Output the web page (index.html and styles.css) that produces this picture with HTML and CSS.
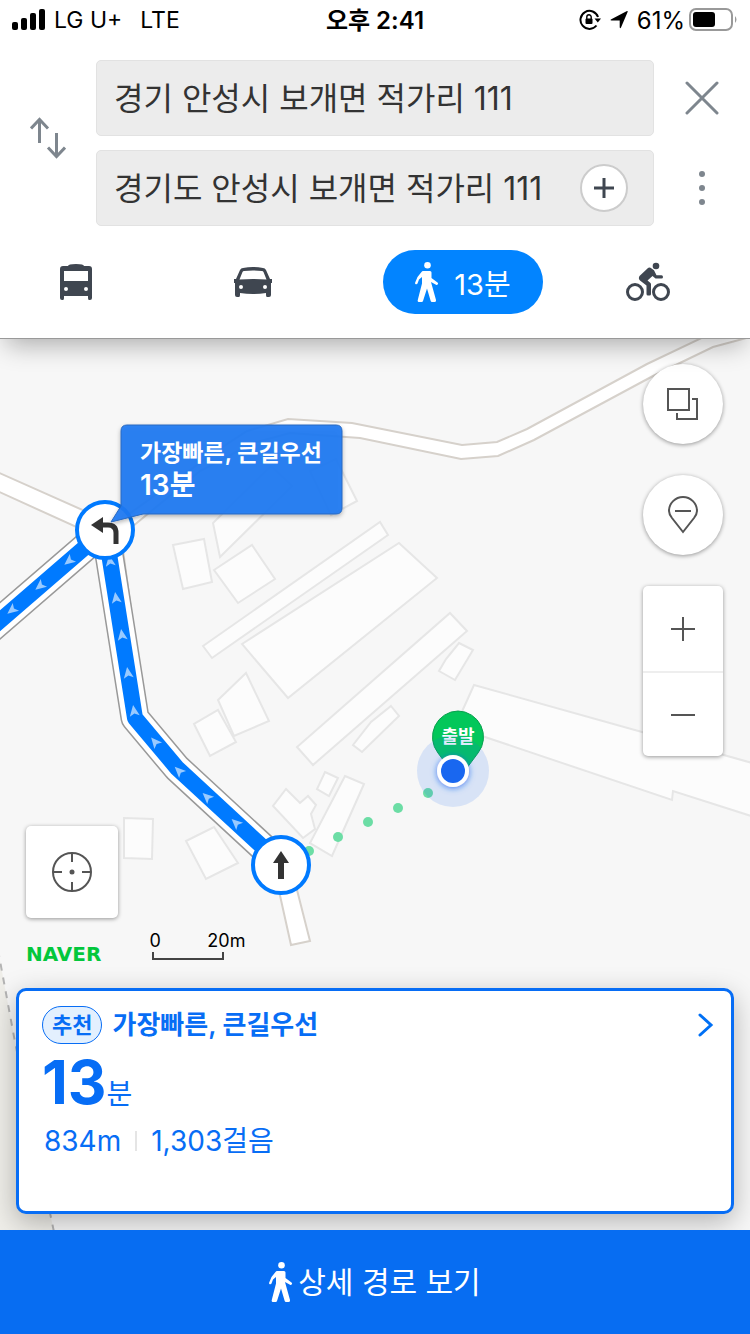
FILE: index.html
```html
<!DOCTYPE html>
<html lang="ko">
<head>
    <meta charset="UTF-8">
    <meta name="viewport" content="width=device-width, initial-scale=1.0">
    <title>도보 길찾기</title>
    <link rel="stylesheet" href="styles.css">
</head>
<body>
    <header class="header">
        <div class="status">
            <div class="status-left">
                <svg width="34" height="22" viewBox="0 0 34 22">
                    <rect x="0" y="13" width="6" height="8" rx="2"/>
                    <rect x="9" y="9" width="6" height="12" rx="2"/>
                    <rect x="18" y="4" width="6" height="17" rx="2"/>
                    <rect x="27" y="0" width="6" height="21" rx="2"/>
                </svg>
                <span>LG U+</span>
                <span class="network">LTE</span>
            </div>
            <div class="status-time">오후 2:41</div>
            <div class="status-right">
                <svg width="22" height="22" viewBox="0 0 22 22">
                    <path d="M17.5 16.5A9 9 0 1 1 19 8" fill="none" stroke="#000" stroke-width="2"/>
                    <path d="M15.5 9.5h6.5l-3.2 4z"/>
                    <rect x="6.5" y="9.5" width="7" height="5.5" rx="1"/>
                    <path d="M7.800 10V8a2.200 2.200 0 0 1 4.400 0v2" fill="none" stroke="#000" stroke-width="1.4"/>
                </svg>
                <svg width="20" height="20" viewBox="0 0 20 20">
                    <path d="M17.5 1.200q1.800-.8 1 1L12 17.500q-.9 1.500-1.300-.2V10.500H2.500q-2-.3-.2-1.300z"/>
                </svg>
                <span>61%</span>
                <svg width="49" height="24" viewBox="0 0 49 24">
                    <rect x="1" y="1" width="42" height="21" rx="6" fill="#fff" stroke="#999" stroke-width="2"/>
                    <rect x="4" y="4" width="22" height="15" rx="3"/>
                    <path d="M46 8q3 3.500 0 7z" fill="#999"/>
                </svg>
            </div>
        </div>

        <div class="search">
            <button class="icon-button swap" aria-label="출발지와 도착지 바꾸기">
                <svg width="36" height="42" viewBox="0 0 36 42" fill="none" stroke="#7e868e" stroke-width="3">
                    <path d="M9.500 26V2M1 11.500l8.500-9 8.500 9"/>
                    <path d="M26.500 16v24M18 30.500l8.500 9 8.500-9"/>
                </svg>
            </button>
            <div class="fields">
                <div class="field">
                    <input type="text" aria-label="출발지" value="경기 안성시 보개면 적가리 111">
                </div>
                <div class="field">
                    <input type="text" aria-label="도착지" value="경기도 안성시 보개면 적가리 111">
                    <button class="add" aria-label="경유지 추가">
                        <svg width="20" height="20" viewBox="0 0 20 20" stroke="#3f4650" stroke-width="3">
                            <path d="M10 0v20M0 10h20"/>
                        </svg>
                    </button>
                </div>
            </div>
            <div class="actions">
                <button class="icon-button" aria-label="닫기">
                    <svg width="34" height="34" viewBox="0 0 34 34" stroke="#7e868e" stroke-width="3" stroke-linecap="round">
                        <path d="M2 2l30 30M32 2L2 32"/>
                    </svg>
                </button>
                <button class="icon-button" aria-label="더보기">
                    <svg width="34" height="36" viewBox="0 0 34 36" fill="#7e868e">
                        <circle cx="17" cy="4" r="3"/>
                        <circle cx="17" cy="18" r="3"/>
                        <circle cx="17" cy="32" r="3"/>
                    </svg>
                </button>
            </div>
        </div>

        <nav class="modes">
            <button class="mode" aria-label="대중교통">
                <svg width="32" height="36" viewBox="0 0 32 36" fill="#3f4650">
                    <path fill-rule="evenodd" d="M8 2q0-2 8-2t8 2h5q3 0 3 3v29q0 2-2 2h-1q-1 0-1-2v-2H4v2q0 2-1 2H2q-2 0-2-2V5q0-3 3-3zM4 7v10h24V7zM6 23a2 2 0 1 0 0 4 2 2 0 0 0 0-4zM26 23a2 2 0 1 0 0 4 2 2 0 0 0 0-4z"/>
                </svg>
            </button>
            <button class="mode" aria-label="자동차">
                <svg width="38" height="30" viewBox="0 0 38 30" fill="#3f4650">
                    <path fill-rule="evenodd" d="M9 1q10-2 20 0 2 0 3 2l4 9h2v4h-1v12q0 2-2 2h-2q-1 0-1-2v-2q-13 2-26 0v2q0 2-1 2H3q-2 0-2-2V16H0v-4h2l4-9q1-2 3-2zM10 4q-1 0-1.500 1L5.500 12.500q13.500-1 27 0L29.500 5q-.5-1-1.500-1-9-1-18 0zM7 18a2 2 0 1 0 0 4 2 2 0 0 0 0-4zM31 18a2 2 0 1 0 0 4 2 2 0 0 0 0-4z"/>
                </svg>
            </button>
            <button class="mode active">
                <svg width="24" height="40" viewBox="0 0 24 40" fill="#fff">
                    <circle cx="12.5" cy="3.300" r="3.300"/>
                    <path d="M8 9h7q1.500 0 1.500 1.500V16l6 4.500q1 .8.300 1.800t-1.800.400L16 20 21 38q.2 2-1.500 2H17q-1 0-1.300-1L12 26.500 8 39q-.3 1-1.300 1H4q-1.600 0-1.300-1.700L7 21.500V15l-3 2.500-1.500 4q-.5 1-1.600.7T.200 20.500L2.500 15 6.500 10q.7-1 1.500-1z"/>
                </svg>
                13분
            </button>
            <button class="mode" aria-label="자전거">
                <svg width="44" height="40" viewBox="0 0 44 40" fill="#3f4650">
                    <circle cx="9" cy="30" r="7.500" fill="none" stroke="#3f4650" stroke-width="3"/>
                    <circle cx="35" cy="30" r="7.500" fill="none" stroke="#3f4650" stroke-width="3"/>
                    <circle cx="30" cy="4" r="3.300"/>
                    <path d="M13.500 14L22 6q1-1 2.500-.2l3.500 2.500 2.500 5 5 0q1.500.2 1.500 1.700T35.500 16.500h-6L26.500 14l-5 4.500 3 2.500q.5.500.5 1.500V32q0 1.500-1.500 1.500H22q-1.500 0-1.500-1.500v-8.500L14 18.500q-2-2-.5-4.500z"/>
                </svg>
            </button>
        </nav>
    </header>

    <main class="map">
        <svg class="map-canvas" viewBox="0 339 750 891" preserveAspectRatio="xMidYMid slice">
            <defs>
                <path id="arrow" d="M0-6L5 5 0 2.500-5 5z"/>
                <filter id="shadow" x="-20%" y="-20%" width="140%" height="150%">
                    <feDropShadow dx="0" dy="2" stdDeviation="2" flood-opacity=".3"/>
                </filter>
                <filter id="glow" x="-50%" y="-50%" width="200%" height="200%">
                    <feDropShadow dx="0" dy="1" stdDeviation="3" flood-color="#1967f0" flood-opacity=".8"/>
                </filter>
            </defs>

            <!-- area at the lower left -->
            <path class="ground" d="M-2 950L15 1042 50 1213 54 1232H-2z"/>
            <path class="boundary" d="M-2 950L15 1042 50 1213 54 1232"/>

            <!-- roads -->
            <path class="road" d="M-5 471L105 520V540L-5 490z"/>
            <path class="road" d="M100 535L215 452 247 431 288 419 352 423 462 445 497 442 527 429 647 364 712 333H765L713 347 653 376 534 440 498 456 461 459 360 438 290 433 253 443 200 471 110 545z"/>
            <path class="road" d="M277 882L291 945 310 941 295 882z"/>
            <path class="road" d="M123 550L131 610"/>

            <!-- buildings -->
            <g class="building">
                <path d="M271 466L292 486 220 557 213 523z"/>
                <path d="M310 471L336 459 357 501 331 515z"/>
                <path d="M173 545L204 539 212 582 183 589z"/>
                <path d="M214 570L252 545 275 579 238 603z"/>
                <path d="M203 646L380 522 388 535 212 658z"/>
                <path d="M242 644L399 543 437 578 288 698z"/>
                <path d="M450 613L467 631 313 765 297 747z"/>
                <path d="M459 643L473 650 455 680 439 671 446 659z"/>
                <path d="M246 673L269 721 234 736 218 700z"/>
                <path d="M218 710L236 742 210 756 194 724z"/>
                <path d="M391 706L399 716 362 752 353 745 371 722z"/>
                <path d="M325 772L338 778 329 796 317 789z"/>
                <path d="M286 789L300 803 308 796 316 805 311 814 315 829 303 838 273 806z"/>
                <path d="M345 776L364 784 332 856 310 843z"/>
                <path d="M124 818L153 819 152 859 124 858z"/>
                <path d="M186 841L214 827 238 863 206 879z"/>
                <path d="M474 685L642 732 770 768V822L673 791 672 800 485 737 455 727z"/>
            </g>

            <!-- route -->
            <g class="route">
                <path class="route-edge" d="M-20 638L105 530 110 560 135 718 177 768 281 864"/>
                <path class="route-side" d="M-20 638L105 530 110 560 135 718 177 768 281 864"/>
                <path class="route-line" d="M-20 638L105 530 110 560 135 718 177 768 281 864"/>
            </g>
            <g class="route-arrows">
                <use href="#arrow" transform="translate(69 561) rotate(231)"/>
                <use href="#arrow" transform="translate(40 586) rotate(231)"/>
                <use href="#arrow" transform="translate(12 610) rotate(231)"/>
                <use href="#arrow" transform="translate(110 561) rotate(-9)"/>
                <use href="#arrow" transform="translate(116 598) rotate(-9)"/>
                <use href="#arrow" transform="translate(122 635) rotate(-9)"/>
                <use href="#arrow" transform="translate(128 673) rotate(-9)"/>
                <use href="#arrow" transform="translate(134 711) rotate(-9)"/>
                <use href="#arrow" transform="translate(155 742) rotate(-40)"/>
                <use href="#arrow" transform="translate(179 771) rotate(-46)"/>
                <use href="#arrow" transform="translate(207 797) rotate(-47)"/>
                <use href="#arrow" transform="translate(236 823) rotate(-47)"/>
            </g>
            <g class="walk-dots">
                <circle cx="309" cy="851" r="5"/>
                <circle cx="338" cy="837" r="5"/>
                <circle cx="368" cy="822" r="5"/>
                <circle cx="398" cy="808" r="5"/>
                <circle cx="428" cy="793" r="5"/>
            </g>

            <!-- turn points -->
            <circle class="turn" cx="105" cy="530" r="28"/>
            <path d="M91 525L103 517V533z" fill="#333"/>
            <path d="M101 525H108Q116 525 116 533V544" fill="none" stroke="#333" stroke-width="5"/>
            <circle class="turn" cx="281" cy="865" r="28"/>
            <path d="M281 851L289 863H284V879H278V863H273z" fill="#333"/>

            <!-- route label -->
            <path class="callout" filter="url(#shadow)" d="M127 425H336Q342 425 342 431V508Q342 514 336 514H143L111 522 121 506V431Q121 425 127 425z"/>
            <text class="callout-title" x="140" y="461">가장빠른, 큰길우선</text>
            <text class="callout-time" x="140" y="495">13분</text>

            <!-- start pin and current position -->
            <path class="pin" d="M458 711A26 26 0 0 0 438 753L458 780 478 753A26 26 0 0 0 458 711z"/>
            <text class="pin-text" x="458" y="743">출발</text>
            <circle class="halo" cx="453" cy="771" r="36"/>
            <circle cx="453" cy="771" r="16" fill="#fff" filter="url(#glow)"/>
            <circle cx="453" cy="771" r="12" fill="#1967f0"/>
        </svg>

        <div class="tools">
            <button class="round" aria-label="지도 종류">
                <svg width="32" height="32" viewBox="0 0 32 32" fill="none" stroke="#555" stroke-width="2">
                    <path d="M1 1h21v21H1zM25 11h5v20H10v-6"/>
                </svg>
            </button>
            <button class="round" aria-label="장소 숨기기">
                <svg width="32" height="38" viewBox="0 0 32 38" fill="none" stroke="#555" stroke-width="2">
                    <path d="M16 36L5 22Q2 18 2 15A14 14 0 0 1 30 15Q30 18 27 22zM8 15h16"/>
                </svg>
            </button>
            <div class="zoom">
                <button aria-label="확대">
                    <svg width="24" height="24" viewBox="0 0 24 24" stroke="#555" stroke-width="2">
                        <path d="M12 0v24M0 12h24"/>
                    </svg>
                </button>
                <button aria-label="축소">
                    <svg width="24" height="24" viewBox="0 0 24 24" stroke="#555" stroke-width="2">
                        <path d="M0 12h24"/>
                    </svg>
                </button>
            </div>
        </div>

        <button class="locate" aria-label="현재 위치">
            <svg width="42" height="42" viewBox="0 0 42 42" fill="none" stroke="#555" stroke-width="2">
                <circle cx="21" cy="21" r="19"/>
                <path d="M21 2v9M21 31v9M2 21h9M31 21h9"/>
                <circle cx="21" cy="21" r="2.500" fill="#555" stroke="none"/>
            </svg>
        </button>

        <div class="legend">
            <span class="logo">NAVER</span>
            <div class="scale">
                <div class="scale-text"><span>0</span><span>20m</span></div>
                <div class="scale-bar"></div>
            </div>
        </div>

        <section class="card">
            <div class="card-head">
                <span class="badge">추천</span>
                <h2>가장빠른, 큰길우선</h2>
                <button class="icon-button" aria-label="경로 보기">
                    <svg width="16" height="26" viewBox="0 0 16 26" fill="none" stroke="#0070f5" stroke-width="3" stroke-linecap="round">
                        <path d="M2 3l11 10L2 23"/>
                    </svg>
                </button>
            </div>
            <p class="duration"><strong>13</strong>분</p>
            <p class="detail"><span>834m</span><span>1,303걸음</span></p>
        </section>
    </main>

    <button class="start">
        <svg width="24" height="40" viewBox="0 0 24 40" fill="#fff">
            <circle cx="12.5" cy="3.300" r="3.300"/>
            <path d="M8 9h7q1.500 0 1.500 1.500V16l6 4.500q1 .8.300 1.800t-1.800.400L16 20 21 38q.2 2-1.500 2H17q-1 0-1.300-1L12 26.500 8 39q-.3 1-1.300 1H4q-1.600 0-1.300-1.700L7 21.500V15l-3 2.500-1.500 4q-.5 1-1.600.7T.200 20.500L2.500 15 6.500 10q.7-1 1.500-1z"/>
        </svg>
        <span>상세 경로 보기</span>
    </button>
</body>
</html>
```

FILE: styles.css
```css
* {
    box-sizing: border-box;
}

body {
    display: flex;
    flex-direction: column;
    min-height: 100vh;
    margin: 0;
    background-color: #fff;
    font-family: Inter, "Noto Sans CJK KR", sans-serif;
}

button,
input {
    font-family: inherit;
    border: none;
    padding: 0;
    background: none;
}

button {
    cursor: pointer;
}

svg {
    display: block;
    flex-shrink: 0;
}

.header {
    position: relative;
    z-index: 1;
    background-color: #fff;
    border-bottom: 1px solid #999;
    box-shadow: 0 12px 24px -6px rgba(0, 0, 0, 0.3);
}

/* status bar */
.status {
    display: grid;
    grid-template-columns: 1fr auto 1fr;
    align-items: center;
    height: 40px;
    padding: 0 12px;
    font-size: 24px;
}

.status-left,
.status-right {
    display: flex;
    align-items: center;
}

.status-left {
    gap: 8px;
    font-size: 23px;
}

.network {
    margin-left: 10px;
}

.status-time {
    padding-bottom: 3px;
    font-weight: 600;
}

.status-right {
    justify-content: flex-end;
    gap: 8px;
}

.status-right span {
    margin-right: -4px;
}

/* search */
.search {
    display: grid;
    grid-template-columns: 96px 1fr 96px;
    padding-top: 20px;
}

.icon-button {
    display: flex;
    align-items: center;
    justify-content: center;
}

.swap {
    padding-bottom: 10px;
}

.fields {
    display: flex;
    flex-direction: column;
    gap: 14px;
    min-width: 0;
}

.field {
    display: flex;
    align-items: center;
    height: 76px;
    padding: 0 25px 0 17px;
    background-color: #ececec;
    border: 1px solid #e2e2e2;
    border-radius: 5px;
}

.field input {
    flex: 1;
    min-width: 0;
    padding-bottom: 4px;
    font-size: 32px;
    color: #333;
}

.add {
    display: flex;
    align-items: center;
    justify-content: center;
    flex-shrink: 0;
    width: 48px;
    height: 48px;
    background-color: #fff;
    border: 2px solid #ccc;
    border-radius: 50%;
}

.actions {
    display: grid;
    grid-template-rows: 1fr 1fr;
    gap: 14px;
}

/* travel modes */
.modes {
    display: grid;
    grid-template-columns: 152fr 202fr 218fr 152fr;
    justify-items: center;
    padding: 24px 26px 24px 0;
}

.mode {
    display: flex;
    align-items: center;
    justify-content: center;
    gap: 15px;
    height: 64px;
    font-size: 29px;
}

.mode.active {
    width: 160px;
    color: #fff;
    background-color: #0284ff;
    border-radius: 32px;
}

/* map */
.map {
    position: relative;
    isolation: isolate;
    flex: 1;
    display: flex;
    flex-direction: column;
    padding: 25px 16px 16px;
    background-color: #f7f7f7;
    overflow: hidden;
}

.map-canvas {
    position: absolute;
    z-index: -1;
    top: 0;
    left: 0;
    width: 100%;
    height: 100%;
}

.ground {
    fill: #efeee9;
}

.boundary {
    fill: none;
    stroke: #b4b4b4;
    stroke-width: 2;
    stroke-dasharray: 7 7;
}

.road {
    fill: #fff;
    stroke: #d6d1cb;
    stroke-width: 2;
}

.building path {
    fill: #fcfcfc;
    stroke: #e6e6e6;
    stroke-width: 2;
}

.route path {
    fill: none;
    stroke-linejoin: round;
}

.route .route-edge {
    stroke: #999;
    stroke-width: 29;
}

.route .route-side {
    stroke: #fff;
    stroke-width: 26;
}

.route .route-line {
    stroke: #007aff;
    stroke-width: 16;
}

.route-arrows {
    fill: #99caff;
}

.walk-dots {
    fill: #6cdda5;
}

.turn {
    fill: #fff;
    stroke: #007aff;
    stroke-width: 4;
}

.callout {
    fill: #1c79f2;
    fill-opacity: 0.92;
    stroke: #2868c0;
    stroke-width: 1;
}

.callout-title,
.callout-time,
.pin-text {
    fill: #fff;
    font-weight: 600;
}

.callout-title {
    font-size: 23px;
}

.callout-time {
    font-size: 28px;
}

.pin {
    fill: #03c75a;
    stroke: #0b9f4f;
    stroke-width: 1;
}

.pin-text {
    font-size: 18px;
    text-anchor: middle;
}

.halo {
    fill: #1967f0;
    fill-opacity: 0.14;
}

.tools {
    display: flex;
    flex-direction: column;
    align-self: flex-end;
    gap: 31px;
    margin-right: 11px;
}

.round,
.zoom,
.locate {
    background-color: #fff;
    box-shadow: 0 1px 4px rgba(0, 0, 0, 0.4);
}

.round {
    display: flex;
    align-items: center;
    justify-content: center;
    width: 80px;
    height: 80px;
    border-radius: 50%;
}

.zoom {
    border-radius: 5px;
}

.zoom button {
    display: flex;
    align-items: center;
    justify-content: center;
    width: 80px;
    height: 85px;
}

.zoom button + button {
    border-top: 2px solid #eee;
}

.locate {
    display: flex;
    align-items: center;
    justify-content: center;
    width: 92px;
    height: 92px;
    margin: auto 0 0 10px;
    border-radius: 5px;
}

.legend {
    display: flex;
    align-items: flex-end;
    gap: 48px;
    margin: 12px 0 28px 10px;
}

.logo {
    font-family: "DejaVu Sans", sans-serif;
    font-size: 20px;
    font-weight: 700;
    line-height: 12px;
    color: #03c73c;
}

.scale-text {
    display: flex;
    justify-content: space-between;
    width: 96px;
    font-size: 18px;
    line-height: 22px;
}

.scale-bar {
    width: 72px;
    height: 8px;
    margin-left: 3px;
    border: 2px solid #444;
    border-top: none;
}

/* route card */
.card {
    min-height: 226px;
    padding: 15px 17px 24px 23px;
    color: #076df5;
    background-color: #fff;
    border: 3px solid #076df5;
    border-radius: 10px;
    box-shadow: 0 8px 28px rgba(0, 0, 0, 0.28);
}

.card-head {
    display: flex;
    align-items: center;
    gap: 10px;
}

.card-head .icon-button {
    margin-left: auto;
}

.badge {
    padding: 0 9px;
    font-size: 22px;
    font-weight: 600;
    line-height: 36px;
    background-color: #e3f0fe;
    border: 1px solid #076df5;
    border-radius: 19px;
}

h2 {
    margin: 0;
    font-size: 26px;
    font-weight: 600;
    line-height: 36px;
}

.duration,
.detail {
    margin: 0;
    font-size: 28px;
}

.duration {
    margin-top: 7px;
    line-height: 62px;
}

.duration strong {
    font-size: 60px;
    font-weight: 700;
}

.detail {
    display: flex;
    align-items: center;
    line-height: 32px;
    padding-left: 2px;
}

.detail span + span::before {
    content: "";
    display: inline-block;
    width: 2px;
    height: 20px;
    margin: 0 14px;
    background-color: #e5e5e5;
}

/* bottom button */
.start {
    display: flex;
    align-items: center;
    justify-content: center;
    gap: 5px;
    height: 104px;
    font-size: 30px;
    color: #fff;
    background-color: #076df2;
}

.start span {
    padding-bottom: 4px;
}
```
